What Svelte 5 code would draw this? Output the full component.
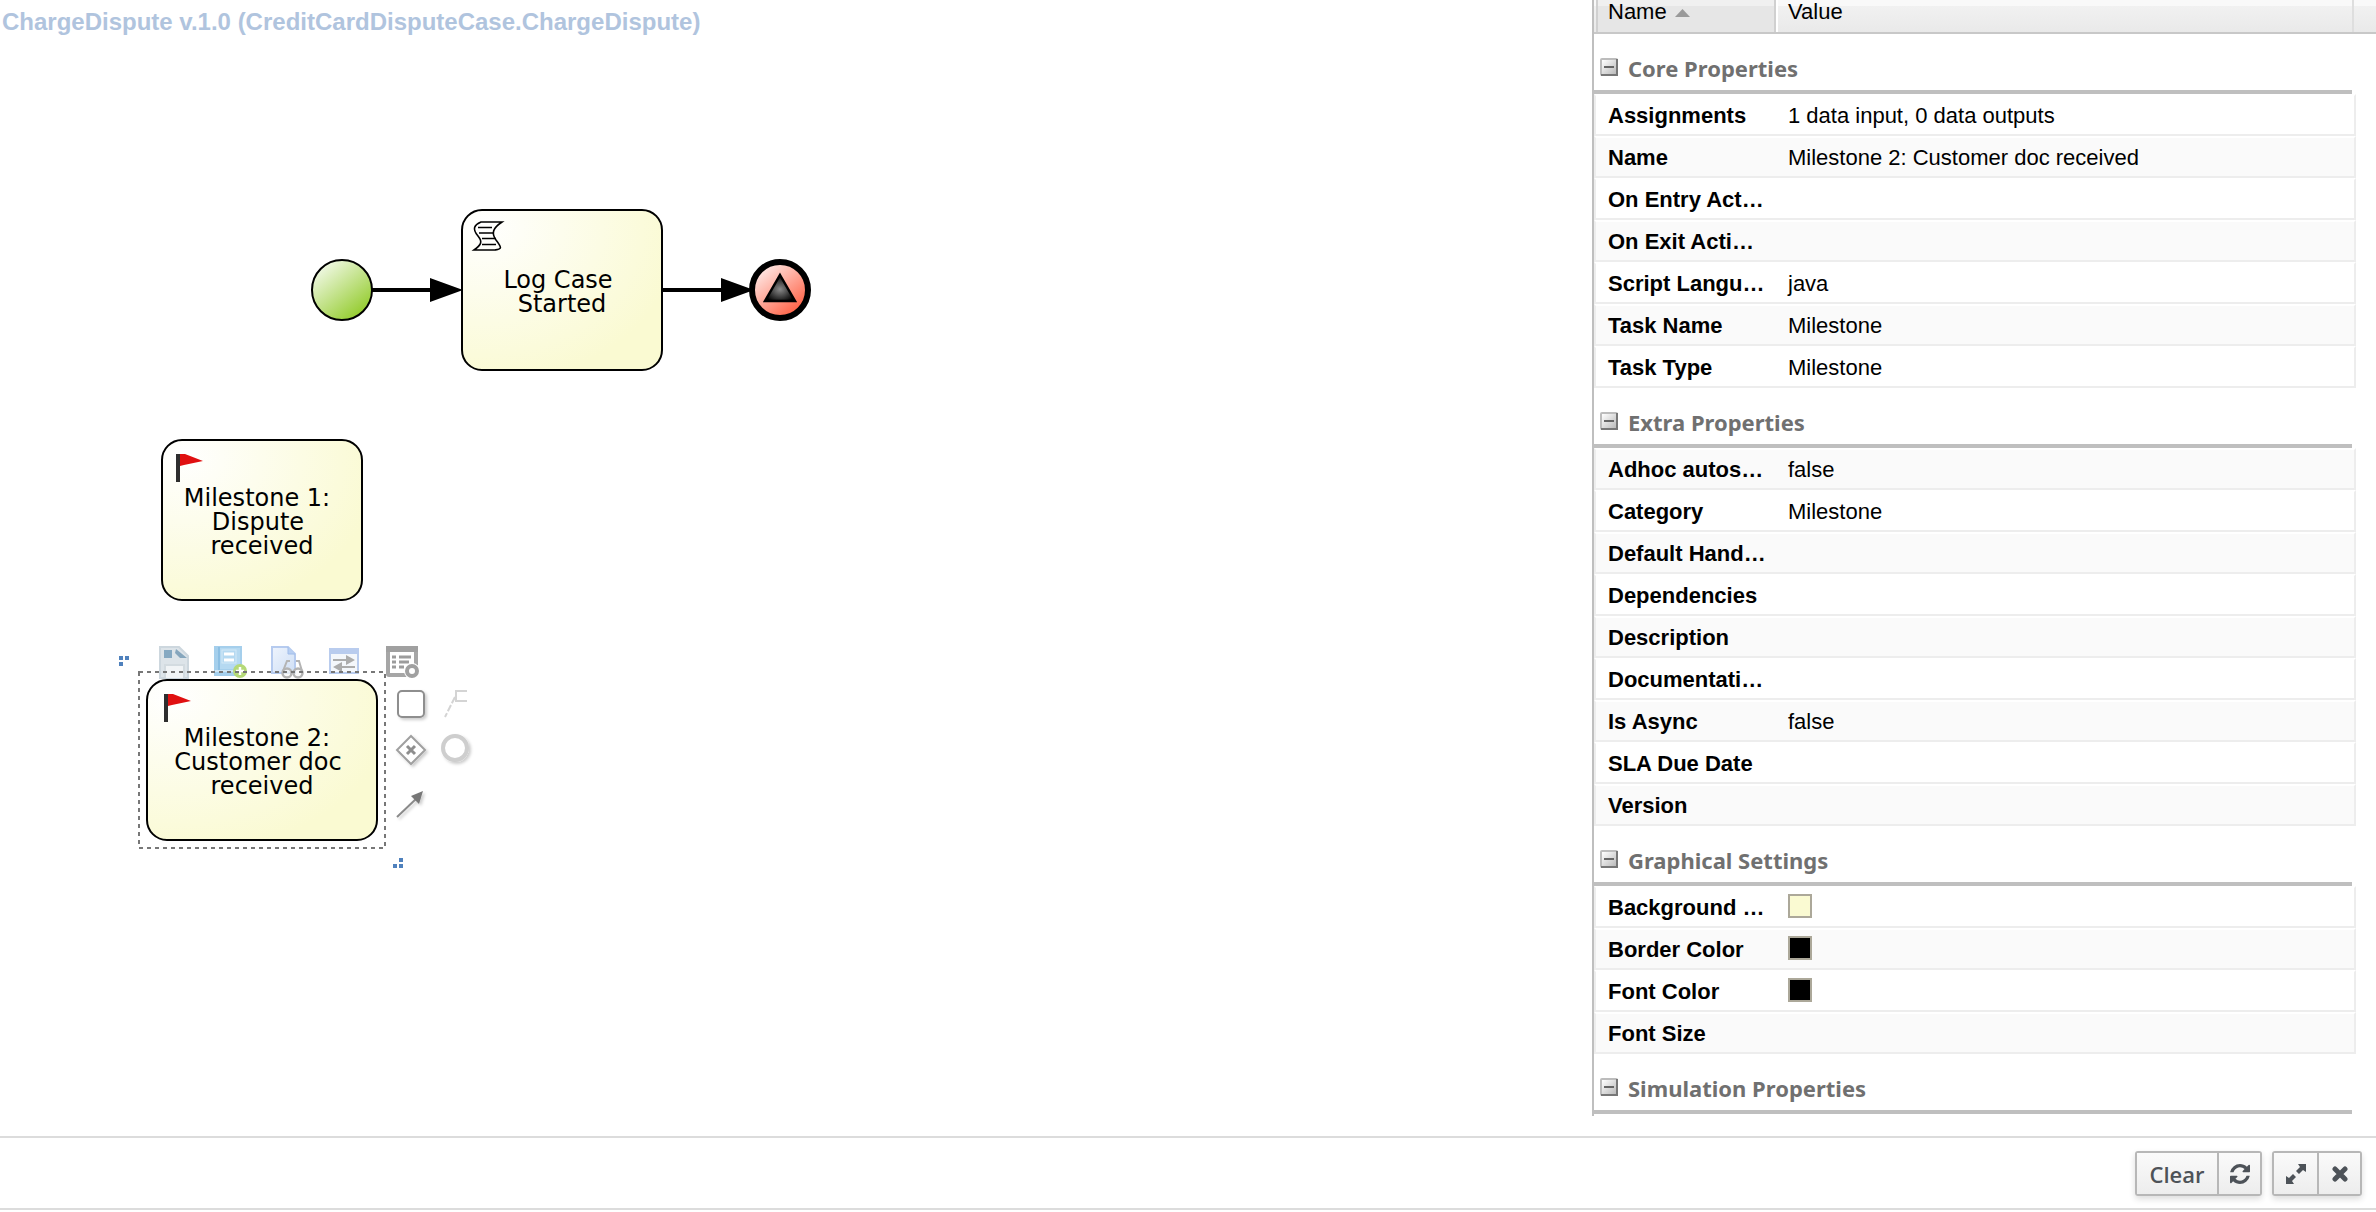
<script>
  const groups = [
    {
      title: 'Core Properties',
      start: 0,
      rows: [
        { name: 'Assignments', value: '1 data input, 0 data outputs' },
        { name: 'Name', value: 'Milestone 2: Customer doc received' },
        { name: 'On Entry Actions', value: '' },
        { name: 'On Exit Actions', value: '' },
        { name: 'Script Language', value: 'java' },
        { name: 'Task Name', value: 'Milestone' },
        { name: 'Task Type', value: 'Milestone' }
      ]
    },
    {
      title: 'Extra Properties',
      start: 1,
      rows: [
        { name: 'Adhoc autostart', value: 'false' },
        { name: 'Category', value: 'Milestone' },
        { name: 'Default Handler', value: '' },
        { name: 'Dependencies', value: '' },
        { name: 'Description', value: '' },
        { name: 'Documentation', value: '' },
        { name: 'Is Async', value: 'false' },
        { name: 'SLA Due Date', value: '' },
        { name: 'Version', value: '' }
      ]
    },
    {
      title: 'Graphical Settings',
      start: 0,
      rows: [
        { name: 'Background Color', color: '#fafad2' },
        { name: 'Border Color', color: '#000000' },
        { name: 'Font Color', color: '#000000' },
        { name: 'Font Size', value: '' }
      ]
    },
    { title: 'Simulation Properties', start: 0, rows: [] }
  ];
</script>

{#snippet flag(x, y)}
  <g transform="translate({x} {y})">
    <rect width="4" height="28" fill="#2e2e2e" />
    <path d="M4 0H9L27 7L8 11L4 12Z" fill="#e01010" />
  </g>
{/snippet}

<div class="page">
  <div class="main">
    <main class="canvas">
      <h1>ChargeDispute v.1.0 (CreditCardDisputeCase.ChargeDispute)</h1>
      <svg class="diagram" width="900" height="900" viewBox="0 0 900 900" role="img" aria-label="Process diagram">
        <defs>
          <radialGradient id="task" cx="0.1" cy="0.1" r="1">
            <stop offset="0" stop-color="#ffffff" />
            <stop offset="1" stop-color="#fafad2" />
          </radialGradient>
          <linearGradient id="green" x1="0.05" y1="0" x2="0.85" y2="1">
            <stop offset="0.08" stop-color="#f4faec" />
            <stop offset="1" stop-color="#8cc81e" />
          </linearGradient>
          <linearGradient id="red" x1="0.05" y1="0" x2="0.85" y2="1">
            <stop offset="0.1" stop-color="#ffeeec" />
            <stop offset="0.9" stop-color="#ff6347" />
          </linearGradient>
          <radialGradient id="dark" cx="0.5" cy="0.55" r="0.55">
            <stop offset="0" stop-color="#8a8a8a" />
            <stop offset="1" stop-color="#000000" />
          </radialGradient>
          <linearGradient id="blue" x1="0" y1="0" x2="1" y2="1">
            <stop offset="0" stop-color="#eef4fd" />
            <stop offset="1" stop-color="#cfdff5" />
          </linearGradient>
          <filter id="soft" x="-30%" y="-30%" width="180%" height="180%">
            <feDropShadow dx="2" dy="2" stdDeviation="1.5" flood-color="#000" flood-opacity="0.2" />
          </filter>
        </defs>

        <circle cx="342" cy="290" r="30" fill="url(#green)" stroke="#000" stroke-width="2" />
        <path d="M372 290H432M662 290H723" stroke="#000" stroke-width="4" />
        <path d="M430 278L463 290L430 302ZM721 278L754 290L721 302Z" />
        <circle cx="780" cy="290" r="28" fill="url(#red)" stroke="#000" stroke-width="6" />
        <path d="M780 275L795 301H765Z" fill="url(#dark)" stroke="#000" stroke-width="2.500" />

        <rect x="462" y="210" width="200" height="160" rx="20" fill="url(#task)" stroke="#000" stroke-width="2" />
        <g fill="none" stroke="#000" stroke-width="1.600">
          <path d="M481 222H502C493 228 491 233 496 240C503 249 501 249 495 250H474C481 245 483 242 478 236C472 229 474 225 481 222Z" />
          <path d="M478 227.500H492M479 233H493M482 238.500H496M482 244.500H496" />
        </g>
        <rect x="162" y="440" width="200" height="160" rx="20" fill="url(#task)" stroke="#000" stroke-width="2" />
        {@render flag(176, 454)}

        <!-- shape toolbar -->
        <path d="M160 647H179L188 656V678H160Z" fill="#dde4e9" stroke="#cdd7de" stroke-width="2" />
        <path d="M176 649L187 658H180L175 653Z" fill="#86a6bd" />
        <rect x="164" y="650" width="8" height="8" fill="#86a9c2" />
        <path d="M165 678V665H184V678" fill="#f1f4f6" stroke="#d3dbe0" stroke-width="2" />

        <rect x="214" y="646" width="28" height="30" fill="#a5cfec" />
        <path d="M219 647V670" stroke="#8cbfe3" stroke-width="2" />
        <rect x="220" y="648" width="20" height="21" fill="#b5d9f1" />
        <path d="M224 654H234M224 660H234" stroke="#fff" stroke-width="3" />
        <rect x="222" y="650" width="14" height="13" fill="none" stroke="#d3e9f7" stroke-width="1" />
        <path d="M215 671H240" stroke="#cfe6f5" stroke-width="2" />
        <circle cx="240" cy="671" r="7" fill="#b5d977" />
        <path d="M240 667V675M236 671H244" stroke="#fff" stroke-width="2.500" />

        <path d="M272 647H288L295 654V673H272Z" fill="url(#blue)" stroke="#b6cbef" stroke-width="2" />
        <path d="M288 647V654H295" fill="#b8cff2" stroke="#a0bdea" />
        <g fill="#f6f6f6" fill-opacity="0.7" stroke="#b4b4b4" stroke-width="2.500">
          <circle cx="287" cy="673" r="4.500" />
          <circle cx="298" cy="673" r="4.500" />
          <path d="M283 671L287 661H290M302 671L299 661H296" fill="none" stroke-width="2" />
        </g>

        <rect x="330" y="649" width="28" height="24" fill="#f4f7fb" stroke="#b9ccee" stroke-width="2" />
        <rect x="330" y="649" width="28" height="5" fill="#b9ccee" />
        <path d="M333 659H346V655L355 660L346 665V661H333ZM355 666H342V662L333 667L342 672V668H355Z" fill="#acacac" />

        <rect x="388" y="648" width="28" height="27" rx="1" fill="#fff" stroke="#a6a6a6" stroke-width="4" />
        <path d="M386 649H418" stroke="#a0a0a0" stroke-width="6" />
        <path d="M392 657H396M399 657H411M392 662H396M399 662H409M392 667H396M399 667H404" stroke="#9c9c9c" stroke-width="3" />
        <circle cx="412" cy="671" r="8" fill="#fff" />
        <circle cx="412" cy="671" r="5" fill="none" stroke="#a0a0a0" stroke-width="4" />

        <rect x="139" y="672" width="246" height="176" fill="none" stroke="#777" stroke-width="2" stroke-dasharray="4 4" />
        <rect x="147" y="680" width="230" height="160" rx="20" fill="url(#task)" stroke="#000" stroke-width="2" />
        {@render flag(164, 694)}

        <path d="M119 656h4v4h-4zM125 656h4v4h-4zM119 662h4v4h-4zM399 858h4v4h-4zM393 864h4v4h-4zM399 864h4v4h-4z" fill="#4f81bd" />

        <!-- connectable shapes beside the selection -->
        <g fill="#fff" stroke="#8e8e8e" stroke-width="2" filter="url(#soft)">
          <rect x="398" y="691" width="26" height="26" rx="4" />
          <path d="M411 736L425 750L411 764L397 750Z" stroke="#a0a0a0" />
          <path d="M407 746L415 754M415 746L407 754" stroke-width="3" />
        </g>
        <circle cx="455" cy="748" r="12" fill="#fff" stroke="#cecece" stroke-width="4" filter="url(#soft)" />
        <g fill="none" stroke="#d4d4d4" stroke-width="2">
          <path d="M467 691H456V701H467" />
          <path d="M455 697L445 717" stroke-dasharray="7 2" />
        </g>
        <g filter="url(#soft)">
          <path d="M397 817L417 798" stroke="#8a8a8a" stroke-width="2" />
          <path d="M423 791L411 796L419 804Z" fill="#777" />
        </g>

        <g class="labels">
          <text x="558" y="288">Log Case</text>
          <text x="562" y="312">Started</text>
          <text x="257" y="506">Milestone 1:</text>
          <text x="258" y="530">Dispute</text>
          <text x="262" y="554">received</text>
          <text x="257" y="746">Milestone 2:</text>
          <text x="258" y="770">Customer doc</text>
          <text x="262" y="794">received</text>
        </g>
      </svg>
    </main>

    <aside class="panel">
      <div class="head">
        <button class="col name">Name
          <svg width="15" height="8" viewBox="0 0 15 8" aria-hidden="true"><path d="M7.500 0L15 8H0Z" fill="#999" /></svg>
        </button>
        <button class="col value">Value</button>
      </div>
      {#each groups as group}
        <section>
          <h2>
            <button class="toggle" aria-label="Collapse {group.title}">
              <svg width="18" height="18" viewBox="0 0 18 18" aria-hidden="true">
                <defs>
                  <linearGradient id="box" x1="0" y1="0" x2="1" y2="1">
                    <stop offset="0" stop-color="#fff" />
                    <stop offset="1" stop-color="#bbb" />
                  </linearGradient>
                </defs>
                <rect width="18" height="18" rx="2" fill="#bcbcbc" />
                <path d="M17 1V17H1" fill="none" stroke="#777" stroke-width="2" />
                <rect x="2" y="2" width="14" height="14" fill="url(#box)" />
                <path d="M4 9H14" stroke="#666" stroke-width="2" />
              </svg>
            </button>
            {group.title}
          </h2>
          {#if group.rows.length}
            <table>
              <tbody>
                {#each group.rows as row, i}
                  <tr class:alt={(i + group.start) % 2 === 1}>
                    <th scope="row">{row.name}</th>
                    <td>
                      {#if row.color}
                        <span class="swatch" style="background: {row.color}"></span>
                      {:else}
                        {row.value}
                      {/if}
                    </td>
                  </tr>
                {/each}
              </tbody>
            </table>
          {/if}
        </section>
      {/each}
    </aside>
  </div>

  <footer>
    <div class="buttons">
      <button class="clear">Clear</button>
      <button aria-label="Refresh">
        <svg width="20" height="20" viewBox="0 0 1536 1536" aria-hidden="true">
          <path fill="#4d5258" d="M1511 928q0 5-1 7-64 268-268 434.500T764 1536q-146 0-282.500-55T238 1324l-129 129q-19 19-45 19t-45-19-19-45V960q0-26 19-45t45-19h448q26 0 45 19t19 45-19 45l-137 137q71 66 161 102t187 36q134 0 250-65t186-179q11-17 53-117 8-23 30-23h192q13 0 22.500 9.500t9.500 22.500zm25-800v448q0 26-19 45t-45 19h-448q-26 0-45-19t-19-45 19-45l138-138Q969 256 768 256q-134 0-250 65T332 500q-11 17-53 117-8 23-30 23H50q-13 0-22.500-9.500T18 608v-7q65-268 270-434.500T768 0q146 0 284 55.500T1297 212l130-129q19-19 45-19t45 19 19 45z" />
        </svg>
      </button>
    </div>
    <div class="buttons">
      <button aria-label="Expand">
        <svg width="20" height="20" viewBox="0 0 20 20" aria-hidden="true">
          <path fill="#4d5258" d="M12 0H20V8L17 6L13 10L10 7L14 3ZM0 20V12L3 14L7 10L10 13L6 17L8 20Z" />
        </svg>
      </button>
      <button aria-label="Close">
        <svg width="16" height="16" viewBox="0 0 16 16" aria-hidden="true">
          <path d="M3 3L13 13M13 3L3 13" stroke="#4d5258" stroke-width="5" stroke-linecap="round" />
        </svg>
      </button>
    </div>
  </footer>
</div>

<style>
  :global(body) {
    margin: 0;
    background: #fff;
  }
  .page {
    display: flex;
    flex-direction: column;
    min-height: 100vh;
    box-sizing: border-box;
    padding-bottom: 2px;
    font-family: 'Liberation Sans', Arial, sans-serif;
    font-size: 22px;
    line-height: 26px;
    color: #000;
  }
  .main {
    flex: 1;
    display: flex;
    padding-bottom: 20px;
  }
  .canvas {
    flex: 1;
    min-width: 0;
    overflow: hidden;
  }
  h1 {
    margin: 0;
    padding: 8px 0 0 2px;
    height: 34px;
    box-sizing: border-box;
    font-size: 24px;
    line-height: 28px;
    color: #b0c4de;
    white-space: nowrap;
  }
  .diagram {
    display: block;
    margin-top: -34px;
  }
  .labels {
    font-family: 'DejaVu Sans', Verdana, sans-serif;
    font-size: 24px;
    text-anchor: middle;
  }
  .panel {
    flex: 0 0 784px;
    box-sizing: border-box;
    border-left: 2px solid #bfbfbf;
  }
  .head {
    display: flex;
    height: 34px;
    box-sizing: border-box;
    padding: 0 22px 0 2px;
    border-bottom: 2px solid #c8c8c8;
    background: linear-gradient(#f9f9f9 6px, #f1f1f1 6px, #e9e9e9);
  }
  button {
    font: inherit;
    color: inherit;
    border: 0;
    margin: 0;
    padding: 0;
    background: none;
  }
  .col {
    display: flex;
    align-items: center;
    gap: 8px;
    box-sizing: border-box;
    padding: 0 10px 8px;
    text-align: left;
  }
  .name {
    width: 180px;
    border: solid #d0d0d0;
    border-width: 0 2px;
    background: linear-gradient(#f0f0f0 6px, #e6e6e6 6px);
  }
  .name svg {
    margin-top: 2px;
  }
  .value {
    flex: 1;
    padding-left: 10px;
    border: solid #dedede;
    border-width: 0 2px 0 0;
    border-left: 2px solid #fff;
  }
  h2 {
    display: flex;
    align-items: flex-start;
    gap: 10px;
    margin: 0 24px 0 0;
    height: 60px;
    box-sizing: border-box;
    padding: 20px 0 0 6px;
    border-bottom: 4px solid #bfbfbf;
    font: bold 22px/28px 'Noto Sans', 'Open Sans', Tahoma, sans-serif;
    color: #707070;
  }
  .toggle {
    height: 26px;
    width: 18px;
    display: flex;
    align-items: center;
  }
  table {
    width: calc(100% - 20px);
    table-layout: fixed;
    border-collapse: separate;
    border-spacing: 0;
  }
  th,
  td {
    height: 42px;
    box-sizing: border-box;
    padding: 6px 10px 4px 12px;
    border-top: 2px solid #fff;
    border-bottom: 2px solid #ededed;
    line-height: 28px;
    text-align: left;
    vertical-align: top;
    white-space: nowrap;
    overflow: hidden;
    text-overflow: ellipsis;
  }
  th {
    width: 182px;
    border-left: 2px solid #ededed;
  }
  td {
    border-right: 2px solid #ededed;
  }
  .alt > * {
    background: #fafafa;
  }
  .swatch {
    display: block;
    width: 20px;
    height: 20px;
    border: 2px solid #aca899;
  }
  footer {
    display: flex;
    justify-content: flex-end;
    gap: 10px;
    padding: 13px 14px 12px;
    border: solid #dcdcdc;
    border-width: 2px 0;
  }
  .buttons {
    display: flex;
    border: 2px solid #b7b7b7;
    border-radius: 3px;
    box-shadow: 0 3px 6px rgba(0, 0, 0, 0.14);
  }
  .buttons button {
    flex: 0 0 auto;
    width: 43px;
    height: 41px;
    box-sizing: border-box;
    display: flex;
    align-items: center;
    justify-content: center;
    background: linear-gradient(#fafafa, #ededed);
    color: #4d5258;
  }
  .buttons button + button {
    border-left: 2px solid #b7b7b7;
  }
  .buttons .clear {
    width: 80px;
    font: 600 22px/26px 'Open Sans', sans-serif;
  }
</style>
